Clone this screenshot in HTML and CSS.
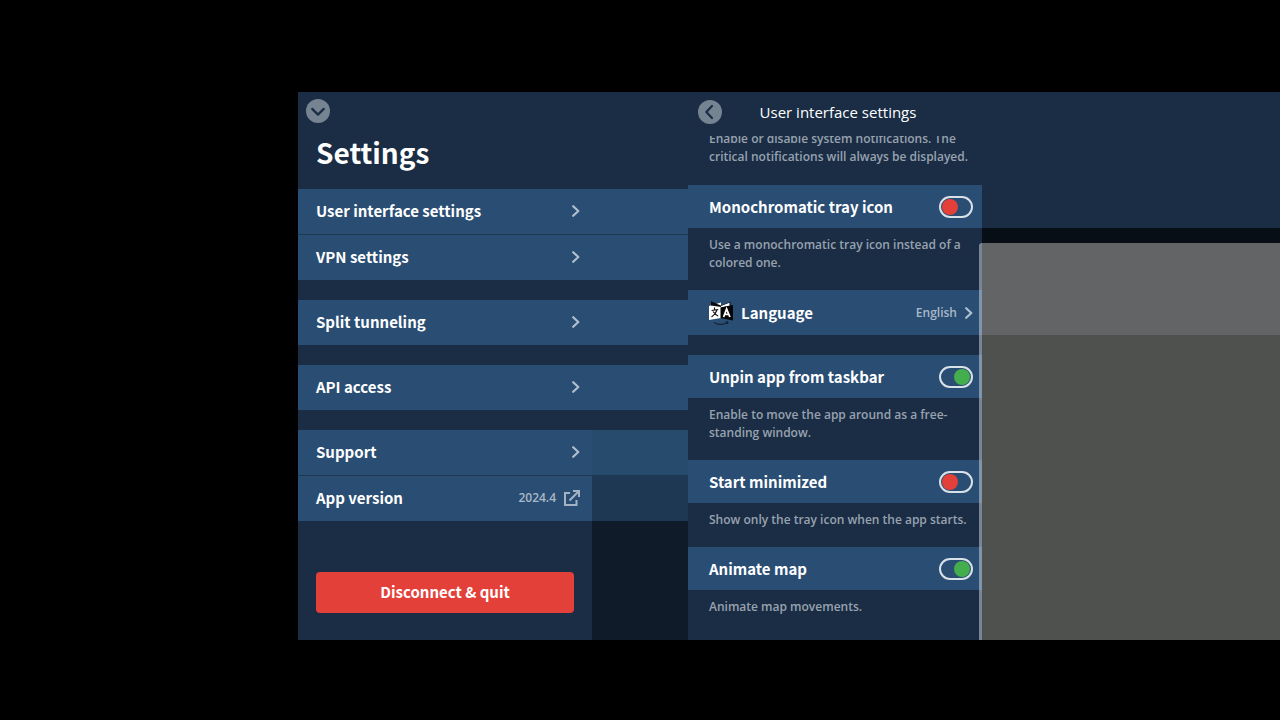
FILE: index.html
```html
<!DOCTYPE html>
<html lang="en">
<head>
<meta charset="utf-8">
<title>Settings</title>
<link rel="stylesheet" href="styles.css">
</head>
<body>
<svg class="defs" aria-hidden="true">
  <symbol id="chevron" viewBox="0 0 8 12"><path d="M1.2 1.2 6.3 6 1.2 10.8" fill="none" stroke="currentColor" stroke-width="2.2" stroke-linecap="round" stroke-linejoin="round"/></symbol>
</svg>
<main class="stage">
  <section class="menu">
    <header class="menu-header">
      <button class="round" aria-label="Close"><svg viewBox="0 0 24 24"><circle cx="12" cy="12" r="12" fill="#768492"/><path d="M6.2 9.9 12 15.6 17.8 9.9" fill="none" stroke="#1a2d45" stroke-width="2.2" stroke-linecap="round" stroke-linejoin="round"/></svg></button>
      <h1>Settings</h1>
    </header>
    <nav class="groups">
      <div class="group">
        <button class="row">User interface settings<svg class="chevron"><use href="#chevron"/></svg></button>
        <button class="row">VPN settings<svg class="chevron"><use href="#chevron"/></svg></button>
      </div>
      <div class="group">
        <button class="row">Split tunneling<svg class="chevron"><use href="#chevron"/></svg></button>
      </div>
      <div class="group">
        <button class="row">API access<svg class="chevron"><use href="#chevron"/></svg></button>
      </div>
      <div class="group">
        <button class="row">Support<svg class="chevron"><use href="#chevron"/></svg></button>
        <button class="row">App version<span class="value">2024.4</span><svg class="external" viewBox="0 0 16 16"><path d="M6 3H1v12h11.500V10M9 1h6v6M15 1 5.500 10.500" fill="none" stroke="currentColor" stroke-width="2"/></svg></button>
      </div>
    </nav>
    <footer class="menu-footer"><button class="quit">Disconnect &amp; quit</button></footer>
  </section>
  <div class="echo" aria-hidden="true">
    <div class="echo-head"></div>
    <div class="echo-groups">
      <div class="group"><div class="band"></div><div class="band"></div></div>
      <div class="group"><div class="band"></div></div>
      <div class="group"><div class="band"></div></div>
      <div class="group"><div class="band teal"></div><div class="band dim"></div></div>
    </div>
    <div class="echo-foot"></div>
  </div>
  <section class="panel">
    <header class="panel-header">
      <button class="round" aria-label="Back"><svg viewBox="0 0 24 24"><circle cx="12" cy="12" r="12" fill="#768492"/><path d="M14 6 8.300 12 14 18" fill="none" stroke="#1a2d45" stroke-width="2.200" stroke-linecap="round" stroke-linejoin="round"/></svg></button>
      <h2>User interface settings</h2>
    </header>
    <div class="scroller">
      <p class="note first">Enable or disable system notifications. The critical notifications will always be displayed.</p>
      <label class="cell">Monochromatic tray icon<input type="checkbox" class="switch"></label>
      <p class="note">Use a monochromatic tray icon instead of a colored one.</p>
      <button class="cell language">
        <svg class="lang-icon" viewBox="0 0 24 24">
          <path d="M2 .5 12 4.500 21.500 1v5L12 9 2 6z" fill="#0b0b0b"/>
          <path d="M0 5 12 1.500V17L0 19z" fill="#fff"/>
          <path d="M2 .5 12 4.500V6L2 4.500z" fill="#0b0b0b"/>
          <path d="M12 5 20.500 1.800v3L12 6.500z" fill="#fff"/>
          <path d="M11.500 6.500 24 4v15.500L11.500 17z" fill="#050505"/>
          <path d="M5.500 6.500v2M2.600 9.500l6.600-1M8 9c-1 3-3 5.500-5.500 7M4 10.500c1.500 2 3 3.500 5.200 4.500" fill="none" stroke="#111" stroke-width="1.200"/>
          <path d="M14.600 16 17.600 8l3.300 8M15.500 13.300h4.200" fill="none" stroke="#fff" stroke-width="1.800"/>
          <path d="M5 21.500c4 2.500 9.500 2.500 13.500 0M16.500 21l2.500 0-.5 2" fill="none" stroke="#0d1a29" stroke-width="1"/>
        </svg>
        Language<span class="value">English</span><svg class="chevron"><use href="#chevron"/></svg>
      </button>
      <label class="cell">Unpin app from taskbar<input type="checkbox" class="switch" checked></label>
      <p class="note">Enable to move the app around as a free-standing window.</p>
      <label class="cell">Start minimized<input type="checkbox" class="switch"></label>
      <p class="note">Show only the tray icon when the app starts.</p>
      <label class="cell">Animate map<input type="checkbox" class="switch" checked></label>
      <p class="note">Animate map movements.</p>
    </div>
    <div class="scrollbar"></div>
  </section>
  <aside class="backdrop" aria-hidden="true">
    <div class="sky"></div>
    <div class="shade"></div>
    <div class="card"></div>
    <div class="ground"></div>
  </aside>
</main>
</body>
</html>
```
FILE: styles.css
```css
* { box-sizing: border-box; }
body { margin: 0; min-height: 100vh; display: flex; background: #000; color: #fff; }
h1, h2, p { margin: 0; }
button { border: 0; padding: 0; background: none; color: inherit; font: inherit; text-align: left; }
.defs { display: none; }
.stage {
  flex: 1;
  margin: 92px 0 80px 298px;
  display: grid;
  grid-template-columns: 294px 96px 294px 1fr;
  overflow: hidden;
  font-family: "Noto Sans CJK JP", "Open Sans", sans-serif;
}
.round { display: block; width: 24px; height: 24px; }
.round svg { display: block; width: 24px; height: 24px; }
.chevron { width: 8px; height: 12px; color: #b0bfce; }

.menu { display: flex; flex-direction: column; background: #1a2d45; }
.menu-header { height: 97px; padding: 7px 8px; }
.menu-header h1 { padding: 5px 10px; font-size: 28px; line-height: 48px; font-weight: 700; }
.groups, .echo-groups { display: flex; flex-direction: column; gap: 20px; }
.group { display: flex; flex-direction: column; gap: 1px; background: #1f3852; }
.row {
  display: flex; align-items: center; gap: 8px;
  height: 45px; padding: 0 12px 2px 18px;
  background: #294d73; font-size: 15px; font-weight: 700;
}
.row .chevron, .value { margin-left: auto; }
.value { font: 600 12px/18px "Open Sans", sans-serif; color: #a9b8c7; }
.external { width: 16px; height: 16px; color: #a3b3c3; }
.menu-footer { padding: 51px 18px 27px; }
.quit {
  width: 100%; height: 41px; padding-bottom: 2px; border-radius: 4px;
  background: #e34039; text-align: center; font-size: 15px; font-weight: 700;
}

.echo { display: flex; flex-direction: column; background: #1a2d45; }
.echo-head { height: 97px; }
.band { height: 45px; background: #294d73; }
.teal { background: #264b6d; }
.dim { background: #1e3853; }
.echo-foot { flex: 1; background: #0f1b28; }

.panel { position: relative; display: flex; flex-direction: column; background: #1a2d45; }
.panel-header {
  display: grid; grid-template-columns: 24px 1fr; align-items: center;
  height: 44px; padding: 0 28px 4px 10px;
}
.panel-header h2 { font: 400 15px/24px "Open Sans", sans-serif; text-align: center; }
.scroller { flex: 1; overflow: hidden; }
.note { padding: 8px 12px 18px 21px; font: 600 12px/18px "Open Sans", sans-serif; color: #98a2af; }
.first { margin-top: -6px; padding-top: 0; padding-bottom: 19px; }
.cell {
  display: flex; align-items: center; justify-content: space-between;
  width: 100%; height: 43px; padding: 0 9px 0 21px;
  background: #294d73; font-size: 15px; font-weight: 700;
}
.language { height: 45px; gap: 8px; margin-bottom: 20px; }
.lang-icon { width: 24px; height: 24px; }
.switch {
  appearance: none; margin: 0; display: flex; align-items: center;
  width: 34px; height: 22px; padding: 0 1px; border: 2px solid #d8e0e8; border-radius: 11px;
}
.switch::before { content: ""; width: 16px; height: 16px; border-radius: 50%; background: #e34039; }
.switch:checked { justify-content: flex-end; }
.switch:checked::before { background: #44ad4d; }
.scrollbar {
  position: absolute; top: 151px; right: 0; bottom: 0; width: 3px;
  border-top-left-radius: 3px; background: rgba(215, 222, 230, .5);
}

.backdrop { display: flex; flex-direction: column; }
.sky { height: 136px; background: #1a2d45; }
.shade { height: 15px; background: #070e16; }
.card { height: 92px; background: #636466; }
.ground { flex: 1; background: #4f514e; }
```
